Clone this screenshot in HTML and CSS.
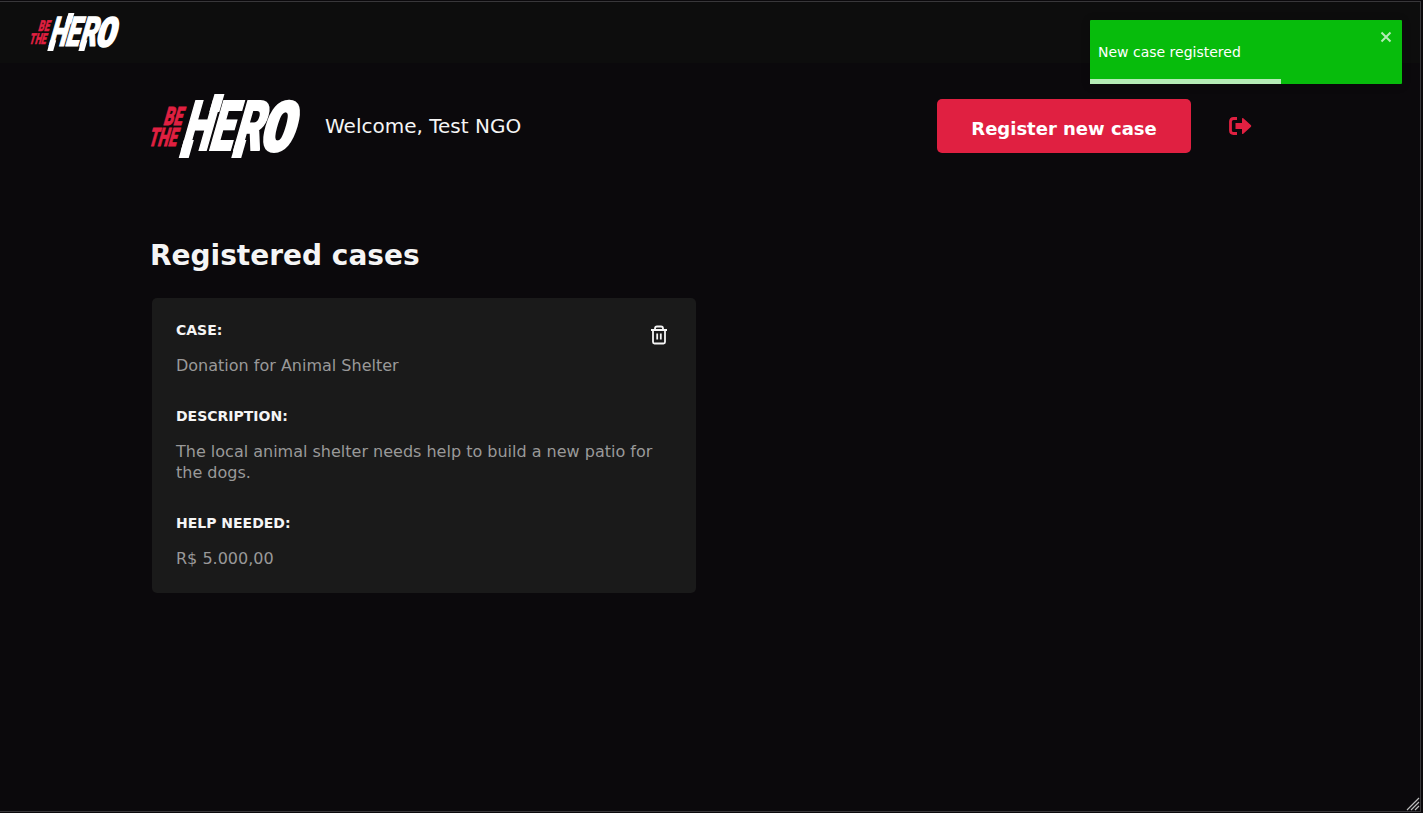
FILE: index.html
```html
<!DOCTYPE html>
<html lang="en">
<head>
<meta charset="utf-8">
<title>Be The Hero</title>
<link rel="stylesheet" href="styles.css">
</head>
<body>
<svg class="defs" aria-hidden="true">
  <symbol id="logo" viewBox="0 0 151 64" overflow="visible">
    <g class="logo-red">
      <text transform="matrix(.6 0 -.285 1 12.800 30.7)">BE</text>
      <text transform="matrix(.58 0 -.285 1 -2.200 51.7)">THE</text>
    </g>
    <g class="logo-white">
      <text transform="matrix(.6 0 -.285 1 29.500 56)">H</text>
      <text transform="matrix(.61 0 -.285 1 57.500 56)">E</text>
      <text transform="matrix(.64 0 -.285 1 81.500 56)">R</text>
      <text class="logo-round" transform="matrix(.86 0 -.285 1 108 55.500)">O</text>
      <g transform="matrix(1 0 -.285 1 31 56)">
        <rect x="0" y="-10" width="10" height="18"/>
        <rect x="17.500" y="-56" width="10" height="18"/>
        <rect x="52.500" y="-10" width="10" height="18"/>
      </g>
    </g>
  </symbol>
</svg>
<div class="window">
  <header class="topbar"><svg class="logo-small" role="img" aria-label="Be The Hero"><use href="#logo"/></svg></header>
  <main class="profile">
    <div class="profile-header">
      <svg class="logo-large" role="img" aria-label="Be The Hero"><use href="#logo"/></svg>
      <span class="welcome">Welcome, Test NGO</span>
      <a class="button">Register new case</a>
      <button class="logout" aria-label="Log out"><svg width="24" height="24" viewBox="0 0 24 24"><path d="M9 4.500H5.500Q2.500 4.500 2.500 7.500V16.500Q2.500 19.500 5.500 19.500H9" fill="none" stroke="currentColor" stroke-width="2.800"/><path d="M7.500 9H14V4.500Q14.300 3.500 15.300 4.200L23 11.300Q23.500 12 23 12.700L15.300 19.800Q14.300 20.500 14 19.500V15H7.500Z" fill="currentColor"/></svg></button>
    </div>
    <h1>Registered cases</h1>
    <ul class="cases">
      <li class="case">
        <div class="case-text">
          <strong>CASE:</strong><p>Donation for Animal Shelter</p>
          <strong>DESCRIPTION:</strong><p>The local animal shelter needs help to build a new patio for the dogs.</p>
          <strong>HELP NEEDED:</strong><p>R$ 5.000,00</p>
        </div>
        <button class="delete" aria-label="Delete case"><svg width="20" height="20" viewBox="0 0 20 20" fill="none" stroke="currentColor" stroke-width="1.800" stroke-linejoin="round"><path d="M2 5H18M4 5V17Q4 18.500 5.500 18.500H14.500Q16 18.500 16 17V5M6 5V3.500Q6 1.500 8 1.500H12Q14 1.500 14 3.500V5M8.200 8.500V14.500M11.800 8.500V14.500"/></svg></button>
      </li>
    </ul>
  </main>
  <svg class="grip" width="14" height="14" viewBox="0 0 14 14"><path d="M1 13 13 1M5 13 13 5M9 13 13 9"/></svg>
</div>
<div class="toast" role="alert">
  <span>New case registered</span>
  <svg class="close" width="12" height="12" viewBox="0 0 12 12"><path d="M1.500 1.500 10.500 10.500M10.500 1.500 1.500 10.500"/></svg>
  <div class="progress"></div>
</div>
</body>
</html>
```
FILE: styles.css
```css
* { box-sizing: border-box; margin: 0; padding: 0; }
body { height: 813px; overflow: hidden; background: #0b090c; color: #f5f5f5; font-family: "DejaVu Sans", sans-serif; }
button { border: 0; background: none; }
.defs { position: absolute; width: 0; height: 0; overflow: visible; }
.window { position: relative; width: 1421px; height: 811px; margin-top: 1px; border: solid #38373a; border-width: 1px 1px 1px 0; }
.topbar { height: 61px; background: #0d0d0d; padding: 11px 0 0 30px; }
.logo-small, .logo-large { overflow: visible; }
.logo-small { display: block; width: 90px; height: 38px; }
.logo-large { width: 151px; height: 64px; }
.logo-red, .logo-white { font-family: Roboto, sans-serif; font-weight: 900; }
.logo-red { font-size: 25.500px; fill: #e02041; }
.logo-red text { stroke: #e02041; stroke-width: .8px; }
.logo-white { font-size: 69px; fill: #fff; }
.logo-white text { stroke: #fff; stroke-width: 2px; }
.logo-white .logo-round { font-family: "DejaVu Sans Mono", monospace; font-size: 65px; font-weight: 700; stroke-width: 4px; }
.profile { width: 1103px; margin-left: 150px; padding-top: 31px; }
.profile-header { display: flex; align-items: center; height: 64px; }
.welcome { margin-left: 24px; font-size: 20px; }
.button { margin-left: auto; width: 254px; height: 54px; border-radius: 5px; background: #e02041; color: #fff; font-size: 18px; font-weight: 700; line-height: 60px; text-align: center; }
.logout { width: 24px; height: 24px; margin: 0 1px 0 37px; color: #e02041; }
.logout svg { display: block; }
h1 { margin-top: 81px; font-size: 28px; line-height: 33px; }
.cases { list-style: none; margin: 26px 0 0 2px; }
.case { display: flex; justify-content: space-between; width: 544px; height: 295px; padding: 24px 0 24px 24px; background: #1a1a1a; border-radius: 5px; }
.case-text { width: 496px; flex: none; padding-right: 16px; }
.case strong { display: block; font-size: 14px; line-height: 16px; }
.case p { margin: 17px 0 32px; color: #999; font-size: 16px; line-height: 21px; }
.case .delete { flex: none; width: 20px; height: 20px; margin: 3px 27px 0 -23px; color: #f5f5f5; }
.grip { position: absolute; right: 0; bottom: 0; fill: none; stroke: #bbb; stroke-width: 1.200; }
.toast { position: absolute; top: 20px; left: 1090px; width: 312px; height: 64px; padding: 0 8px; background: #07bc0c; color: #fff; font-size: 14px; line-height: 64px; box-shadow: 0 1px 10px rgba(0,0,0,.2); border-radius: 1px; }
.close { position: absolute; top: 11px; right: 10px; fill: none; stroke: #b5ebb6; stroke-width: 2; }
.progress { position: absolute; left: 0; bottom: 0; width: 190.500px; height: 5px; background: #b5ebb6; }
```
